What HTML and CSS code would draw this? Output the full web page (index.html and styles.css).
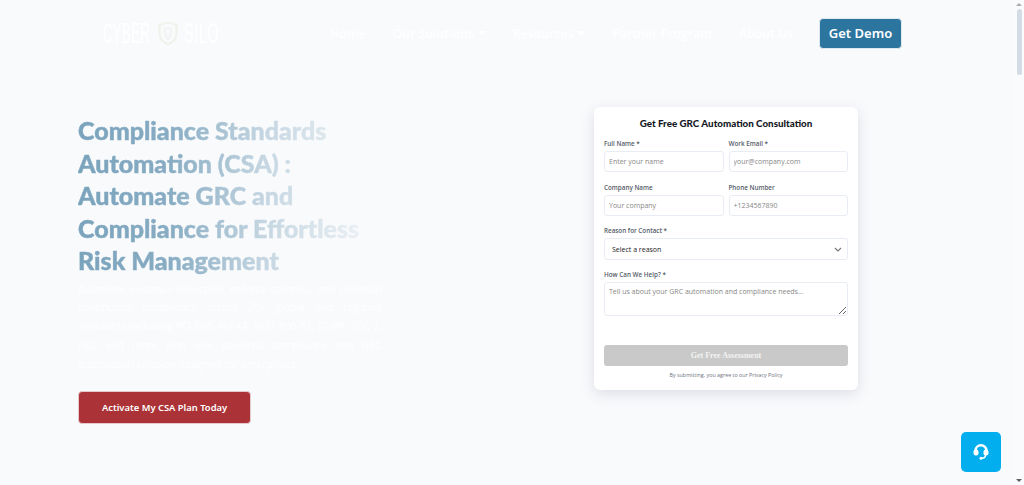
FILE: index.html
```html
<!DOCTYPE html>
<html lang="en">
<head>
    <meta name="viewport" content="width=device-width, initial-scale=1">
    <link rel="stylesheet" href="styles.css">
</head>

<body>
    <div class="page">
        <header class="topbar">
            <a class="logo">
                <span class="logo-word cyber">CYBER</span>
                <svg class="logo-shield" width="20" height="25" viewBox="0 0 20 25" fill="none">
                    <path d="M10 1.5 L18.5 4 V12.5 C18.5 18 14 22 10 23.5 C6 22 1.5 18 1.5 12.5 V4 Z" stroke="#f0f2ec" stroke-width="2"/>
                    <circle cx="10" cy="10.5" r="3.6" stroke="#f1f3f3" stroke-width="1.8"/>
                    <path d="M6.5 14 L10 18.5 L13.5 14" stroke="#f1f3f3" stroke-width="1.8"/>
                </svg>
                <span class="logo-word silo">SILO</span>
            </a>
            <nav class="menu">
                <a>Home</a>
                <a class="has-caret">Our Solutions</a>
                <a class="has-caret">Resources</a>
                <a>Partner Program</a>
                <a>About Us</a>
            </nav>
            <a class="demo-btn">Get Demo</a>
        </header>

        <main class="hero">
            <section class="hero-copy">
                <h1>Compliance Standards Automation (CSA) : Automate GRC and Compliance for Effortless Risk Management</h1>
                <p>Automate evidence collection, enforce controls, and maintain continuous compliance across 20+ global and regional standards including PCI DSS, HIPAA, NIST 800-53, GDPR, SOC 2, ISO, and more with one powerful compliance and GRC automation solution designed for enterprises.</p>
                <a class="cta">Activate My CSA Plan Today</a>
            </section>

            <form class="card">
                <h3>Get Free GRC Automation Consultation</h3>
                <div class="row">
                    <label class="field">Full Name *<input type="text" placeholder="Enter your name"></label>
                    <label class="field">Work Email *<input type="text" placeholder="your@company.com"></label>
                </div>
                <div class="row">
                    <label class="field">Company Name<input type="text" placeholder="Your company"></label>
                    <label class="field">Phone Number<input type="text" placeholder="+1234567890"></label>
                </div>
                <label class="field">Reason for Contact *
                    <span class="select">Select a reason
                        <svg width="8" height="5" viewBox="0 0 8 5" fill="none"><path d="M1 1 L4 4 L7 1" stroke="#777" stroke-width="1.1"/></svg>
                    </span>
                </label>
                <label class="field">How Can We Help? *<textarea placeholder="Tell us about your GRC automation and compliance needs..."></textarea></label>
                <button type="button" class="submit">Get Free Assessment</button>
                <div class="note">By submitting, you agree to our Privacy Policy</div>
            </form>
        </main>

        <a class="help-btn">
            <svg width="16" height="16" viewBox="0 0 16 16" fill="none">
                <path d="M2.5 9 V6.5 A5.5 5.2 0 0 1 13.5 6.5 V9" stroke="#fff" stroke-width="2.6"/>
                <rect x="0.5" y="5.5" width="5" height="6" rx="2.2" fill="#fff"/>
                <rect x="10.5" y="5.5" width="5" height="6" rx="2.2" fill="#fff"/>
                <path d="M12.5 11 C12.5 13.4 11.5 14.2 9 14.2" stroke="#fff" stroke-width="1.5"/>
                <circle cx="8" cy="14.2" r="1.5" fill="#fff"/>
            </svg>
        </a>
    </div>

    <div class="scrollbar">
        <span class="arrow up"></span>
        <span class="thumb"></span>
        <span class="arrow down"></span>
    </div>
</body>
</html>
```

FILE: styles.css
```css
* {
    box-sizing: border-box;
}

html, body {
    height: 100%;
    margin: 0;
    overflow: hidden;
}

body {
    display: flex;
    background-color: #f9fafc;
    font-family: "Open Sans", "Liberation Sans", sans-serif;
}

.page {
    flex: 1;
    position: relative;
    min-width: 0;
}

/* top bar */
.topbar {
    display: flex;
    align-items: center;
    height: 66px;
    padding: 0 112px 0 103px;
}

.logo {
    display: flex;
    flex: none;
    align-items: center;
    width: 227px;
    color: #fff;
    font-family: "Liberation Sans", sans-serif;
    font-size: 29px;
    line-height: 29px;
}

.logo-word {
    display: block;
    white-space: nowrap;
    letter-spacing: 1px;
    transform-origin: left center;
}

.logo-word.cyber {
    width: 55px;
    transform: scaleX(0.45);
}

.logo-word.silo {
    width: 34px;
    margin-left: 6px;
    transform: scaleX(0.5);
}

.logo-shield {
    flex: none;
}

.menu {
    display: flex;
    gap: 27px;
    flex: 1;
    color: #fff;
    font-size: 12.3px;
    font-weight: 600;
    white-space: nowrap;
}

.has-caret::after {
    content: "";
    display: inline-block;
    margin-left: 4px;
    vertical-align: 3px;
    border-top: 4px solid #fff;
    border-left: 4px solid transparent;
    border-right: 4px solid transparent;
}

.demo-btn {
    flex: none;
    width: 83px;
    height: 31px;
    border: 1px solid #dfe8ee;
    border-radius: 4px;
    background-color: #2c759f;
    color: #fff;
    font-family: "Noto Sans", sans-serif;
    font-size: 13px;
    font-weight: 600;
    line-height: 29px;
    text-align: center;
}

/* hero */
.hero {
    display: flex;
    justify-content: space-between;
    align-items: flex-start;
    padding: 41px 156px 0 78px;
}

.hero-copy {
    width: 304px;
    padding-top: 7px;
}

h1 {
    width: 304px;
    margin: 0;
    background: linear-gradient(90deg, #7aa3bc 0%, #87acc3 30%, #c6d7e2 62%, #f2f5f8 100%);
    -webkit-background-clip: text;
    background-clip: text;
    color: transparent;
    -webkit-text-stroke: 0.5px transparent;
    font-family: "Lato", sans-serif;
    font-size: 25px;
    font-weight: 900;
    line-height: 32.5px;
}

.hero-copy p {
    margin: 3px 0 0;
    color: #fff;
    font-size: 10.3px;
    line-height: 18.75px;
    text-align: justify;
}

.cta {
    display: block;
    width: 173px;
    height: 33px;
    margin-top: 18px;
    border: 1px solid #e6c9cc;
    border-radius: 4px;
    background-color: #ab3236;
    color: #fff;
    font-family: "Noto Sans", sans-serif;
    font-size: 9.4px;
    font-weight: 600;
    line-height: 31px;
    text-align: center;
}

/* form card */
.card {
    display: flex;
    flex-direction: column;
    width: 264px;
    height: 283px;
    padding: 9px 10px 10px;
    border-radius: 6px;
    background-color: #fff;
    box-shadow: 0 4px 14px rgba(40, 60, 90, 0.14);
}

.card h3 {
    margin: 0 0 9px;
    color: #14181f;
    font-family: "Lato", sans-serif;
    font-size: 9.8px;
    font-weight: 900;
    line-height: 14px;
    text-align: center;
}

.row {
    display: flex;
    gap: 5px;
    margin-bottom: 11px;
}

.row + .row {
    margin-bottom: 10px;
}

.field {
    display: flex;
    flex: 1;
    flex-direction: column;
    gap: 3px;
    color: #555c69;
    font-size: 6.3px;
    font-weight: 600;
    line-height: 9px;
}

.field input, .select, .field textarea {
    width: 100%;
    border: 1px solid #e8ecf3;
    border-radius: 3px;
    background-color: #fff;
    font-family: "Open Sans", sans-serif;
    font-size: 7px;
    font-weight: 400;
}

.field input {
    height: 21px;
    padding: 0 4px;
    color: #888;
}

.field ::placeholder {
    color: #888;
    opacity: 1;
}

.select {
    display: flex;
    justify-content: space-between;
    align-items: center;
    height: 22px;
    margin-bottom: 10px;
    padding: 0 5px 0 7px;
    color: #222;
}

.field textarea {
    display: block;
    height: 34px;
    padding: 4px;
    resize: vertical;
}

.submit {
    height: 23px;
    margin-top: 29px;
    border: none;
    border-radius: 3px;
    background-color: #c9c9c9;
    color: #f3f3f3;
    font-family: "Liberation Serif", serif;
    font-size: 8px;
    font-weight: 700;
}

.note {
    margin-top: 5px;
    color: #6c7280;
    font-size: 5.35px;
    line-height: 9px;
    text-align: center;
}

/* floating help button */
.help-btn {
    position: absolute;
    right: 13px;
    bottom: 13px;
    display: flex;
    justify-content: center;
    align-items: center;
    width: 40px;
    height: 40px;
    border-radius: 5px;
    background-color: #03aeef;
}

/* window scrollbar */
.scrollbar {
    display: flex;
    flex: none;
    flex-direction: column;
    align-items: center;
    width: 10px;
    padding: 3px 0;
    background-color: #fafbfc;
}

.arrow {
    flex: none;
    width: 0;
    height: 0;
    border-left: 3px solid transparent;
    border-right: 3px solid transparent;
}

.arrow.up {
    border-bottom: 3px solid #a9adb2;
}

.arrow.down {
    border-top: 3px solid #5c5f63;
}

.thumb {
    flex: none;
    width: 5px;
    height: 66px;
    margin-top: 3px;
    margin-bottom: auto;
    border-radius: 3px;
    background-color: #d3dbe4;
}
```
